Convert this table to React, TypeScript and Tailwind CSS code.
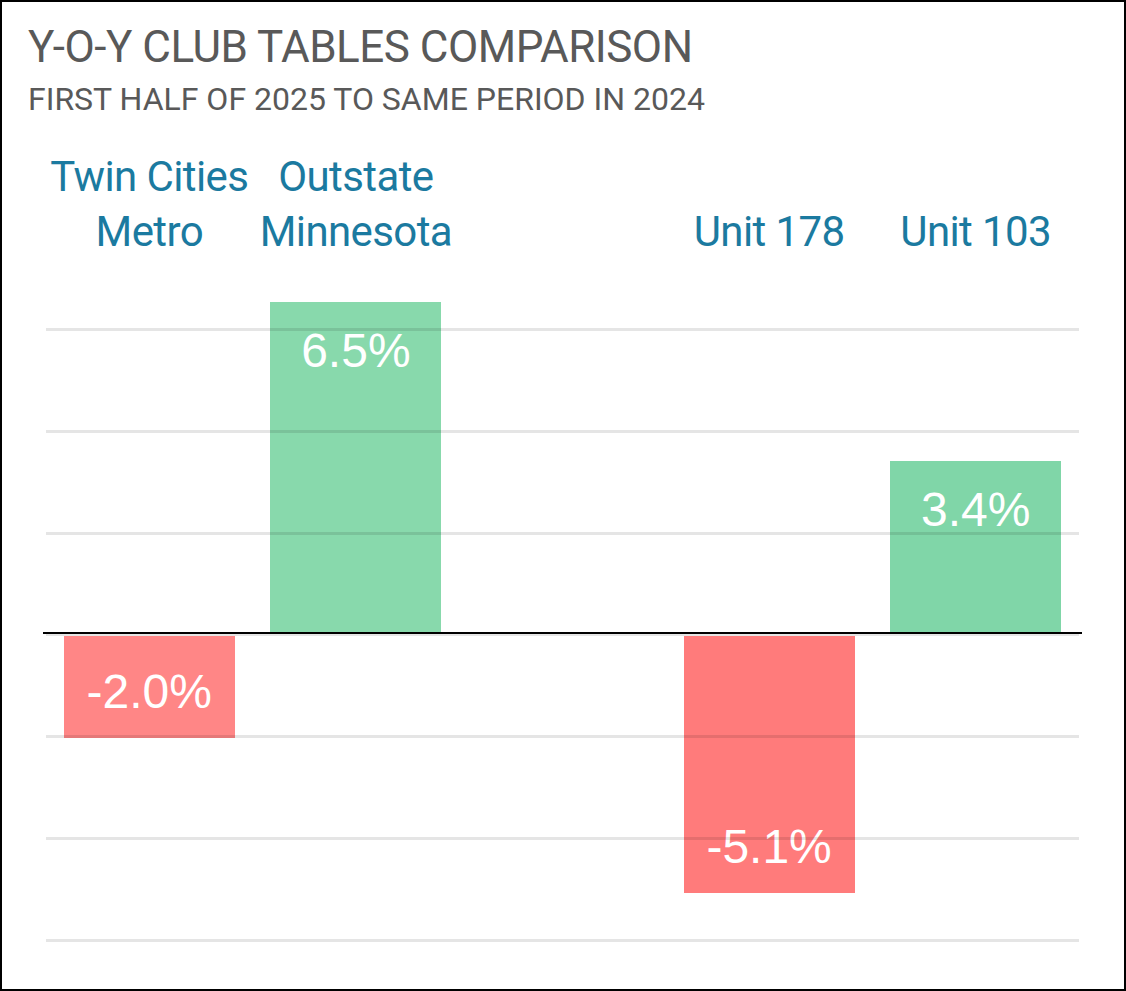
const bars = [
  { top: "Twin Cities", bottom: "Metro", value: -2.0, height: 102, color: "#ff8686" },
  { top: "Outstate", bottom: "Minnesota", value: 6.5, height: 330, color: "#88d9ac" },
  { top: "", bottom: "", value: 0, height: 0, color: "" },
  { top: "", bottom: "Unit 178", value: -5.1, height: 257, color: "#ff7b7b" },
  { top: "", bottom: "Unit 103", value: 3.4, height: 171, color: "#80d6a8" },
];

const App = () => {
  return (
    <div className="w-[1126px] h-[991px] overflow-hidden border-2 border-black bg-white">
      {/* Header */}
      <div className="pl-[26px] pt-[23px] font-['Roboto',sans-serif] text-[#595959]">
        <h1 className="text-[44px] leading-[44px] tracking-[-0.5px]">Y-O-Y CLUB TABLES COMPARISON</h1>
        <p className="mt-[14px] text-[32px] leading-[32px]">FIRST HALF OF 2025 TO SAME PERIOD IN 2024</p>
      </div>

      {/* Category labels */}
      <div className="ml-[44px] mt-[34px] grid w-[1033px] grid-cols-5 font-['Roboto',sans-serif] text-[42px] leading-[55px] tracking-[-0.6px] text-[#1b7aa0]">
        {bars.map((b, i) => (
          <div key={i} className="flex h-[110px] flex-col items-center justify-end">
            {b.top && <span className="whitespace-nowrap">{b.top}</span>}
            {b.bottom && <span className="whitespace-nowrap">{b.bottom}</span>}
          </div>
        ))}
      </div>

      {/* Plot */}
      <div className="relative ml-[44px] w-[1033px] font-['Liberation_Sans',Arial,sans-serif] text-[48px] leading-[48px] text-white">
        <div className="grid h-[373px] grid-cols-5">
          {bars.map((b, i) => (
            <div key={i} className="flex items-end justify-center">
              {b.value > 0 && (
                <div
                  className="flex w-[171px] justify-center pt-[25px]"
                  style={{ height: b.height, backgroundColor: b.color }}
                >
                  {b.value.toFixed(1)}%
                </div>
              )}
            </div>
          ))}
        </div>
        <div className="-mx-[3px] h-[2px] bg-black" />
        <div className="grid grid-cols-5">
          {bars.map((b, i) => (
            <div key={i} className="flex items-start justify-center">
              {b.value < 0 && (
                <div
                  className="mt-[2px] flex w-[171px] items-end justify-center pb-[22px]"
                  style={{ height: b.height, backgroundColor: b.color }}
                >
                  {b.value.toFixed(1)}%
                </div>
              )}
            </div>
          ))}
        </div>

        {/* Gridlines, drawn over the bars */}
        <div className="pointer-events-none absolute left-0 right-0 top-[69px] flex h-[614px] flex-col justify-between">
          {[0, 1, 2, 3, 4, 5, 6].map((i) => (
            <div key={i} className="h-[3px] bg-black/10" />
          ))}
        </div>
      </div>
    </div>
  );
};

export default App;
